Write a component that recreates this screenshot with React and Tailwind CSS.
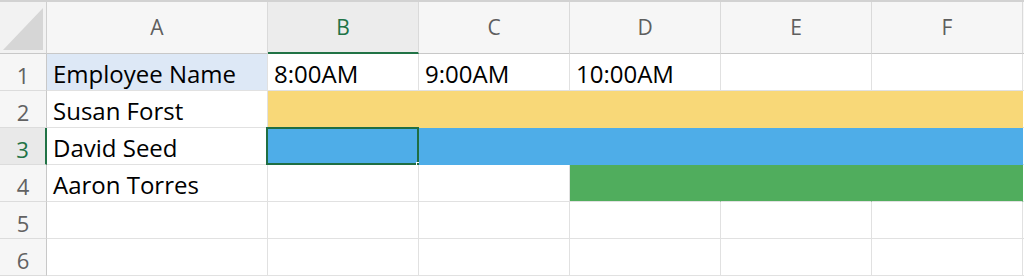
import React from "react";

const font = { fontFamily: "'Open Sans', Lato, sans-serif" };

const colW = ["w-[221px]", "w-[151px]", "w-[151px]", "w-[151px]", "w-[151px]", "w-[151px]"];
const letters = ["A", "B", "C", "D", "E", "F"];

const rows = [
  { n: "1", cells: ["Employee Name", "8:00AM", "9:00AM", "10:00AM", "", ""], fills: ["a1", "", "", "", "", ""] },
  { n: "2", cells: ["Susan Forst", "", "", "", "", ""], fills: ["", "y", "y", "y", "y", "y"] },
  { n: "3", cells: ["David Seed", "", "", "", "", ""], fills: ["", "b", "b", "b", "b", "b"], active: true },
  { n: "4", cells: ["Aaron Torres", "", "", "", "", ""], fills: ["", "", "", "g", "g", "g"] },
  { n: "5", cells: ["", "", "", "", "", ""], fills: ["", "", "", "", "", ""] },
  { n: "6", cells: ["", "", "", "", "", ""], fills: ["", "", "", "", "", ""] },
];

function fillClass(f) {
  if (f === "y") return "bg-[#f8d878] border-r-[#f8d878]";
  if (f === "b") return "bg-[#4eade8] border-r-[#4eade8]";
  if (f === "g") return "bg-[#50ad5d] border-r-[#50ad5d]";
  if (f === "a1") return "bg-[#dde8f6] border-r-[#e1e1e1]";
  return "bg-white border-r-[#e1e1e1]";
}

function bottomClass(f, nextF) {
  if (f && f !== "a1" && f === nextF) return "border-b-[#e1e1e1]";
  if (f === "y") return "border-b-[#f8d878]";
  if (f === "b") return "border-b-[#4eade8]";
  return "border-b-[#e1e1e1]";
}

export default function App() {
  return (
    <div className="w-[1024px] h-[278px] bg-white overflow-hidden" style={font}>
      <div className="border-t-[2px] border-t-[#d2d2d2] flex flex-col">
        <div className="flex h-[52px]">
          <div className="w-[47px] h-full shrink-0 bg-[#f2f2f2] border-r border-r-[#d0d0d0] border-b border-b-[#c8c8c8] relative">
            <svg className="absolute left-0 top-0" width="46" height="51" viewBox="0 0 46 51">
              <polygon points="3,48 43,6 43,48" fill="#d6d6d6" />
            </svg>
          </div>
          {letters.map((l, i) => (
            <div
              key={l}
              className={`${colW[i]} shrink-0 h-full flex items-center justify-center text-[21px] border-r border-r-[#dadada] ${
                l === "B"
                  ? "bg-[#ececec] text-[#217346] border-b-2 border-b-[#217346] pt-[2px]"
                  : "bg-[#f6f6f6] text-[#5e5e5e] border-b border-b-[#c8c8c8]"
              }`}
            >
              {l}
            </div>
          ))}
          <div className="flex-1 h-full bg-[#f6f6f6] border-b border-b-[#c8c8c8]" />
        </div>
        {rows.map((r, ri) => (
          <div key={r.n} className="flex h-[37px]">
            <div
              className={`w-[47px] shrink-0 h-full flex items-end justify-center pb-[4px] text-[22px] leading-none border-b border-b-[#dcdcdc] ${
                r.active
                  ? "bg-[#e9e9e9] text-[#217346] border-r-2 border-r-[#217346]"
                  : "bg-[#f6f6f6] text-[#626262] border-r border-r-[#c8c8c8]"
              }`}
            >
              {r.n}
            </div>
            {r.cells.map((c, ci) => {
              const f = r.fills[ci];
              const nextF = rows[ri + 1] ? rows[ri + 1].fills[ci] : "";
              const isActive = r.active && ci === 1;
              return (
                <div
                  key={ci}
                  className={`${colW[ci]} shrink-0 h-full relative border-r border-b ${fillClass(f)} ${bottomClass(f, nextF)} flex items-end pl-[6px] pb-[4px] text-[24px] text-black leading-none whitespace-nowrap`}
                >
                  <span>{c}</span>
                  {isActive && (
                    <>
                      <div className="absolute left-[-2px] top-[-1px] right-[-1px] bottom-[-1px] border-2 border-[#1f6e43]" />
                      <div className="absolute right-[-4px] bottom-[-4px] w-[6px] h-[6px] bg-[#1f6e43] border border-white" />
                    </>
                  )}
                </div>
              );
            })}
            <div className="flex-1 h-full border-b border-b-[#e1e1e1]" />
          </div>
        ))}
      </div>
    </div>
  );
}
